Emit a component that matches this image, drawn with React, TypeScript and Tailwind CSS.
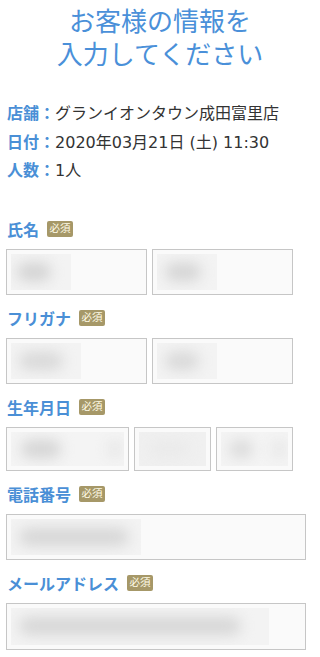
import React from 'react'

type Blob = { left: number; width: number; tone: string }

type Box = { width: string; height: string; inner: number; innerBg?: string; blobs: Blob[] }

// blurred placeholder content inside an input box
function BlurInput({ width, height, inner, innerBg = 'bg-[#f3f3f3]', blobs }: Box) {
  return (
    <div className={`${width} ${height} shrink-0 border border-[#c6c6c6] bg-[#fafafa] p-[4px]`}>
      <div className={`relative h-full overflow-hidden ${innerBg}`} style={{ width: inner }}>
        {blobs.map((b, i) => (
          <span
            key={i}
            className={`absolute top-1/2 h-[18px] -translate-y-1/2 rounded-full blur-[7px] ${b.tone}`}
            style={{ left: b.left, width: b.width }}
          />
        ))}
      </div>
    </div>
  )
}

function Label({ text }: { text: string }) {
  return (
    <div className="flex h-[24px] items-center pl-[1px]">
      <span className="text-[16px] font-bold text-[#4a8fd6]">{text}</span>
      <span className="ml-[8px] flex h-[16px] w-[26px] items-center justify-center rounded-[2px] bg-[#a69868] text-[10.5px] leading-none text-[#fffbe6]">
        必須
      </span>
    </div>
  )
}

export default function App() {
  return (
    <div className="min-h-[657px] w-[320px] bg-white px-[6px] font-['Noto_Sans_CJK_JP','Noto_Sans',sans-serif]">
      <h1 className="flex flex-col items-center pt-[3px] text-[26px] font-normal leading-[33px] text-[#4a90d9]">
        <span>お客様の情報を</span>
        <span>入力してください</span>
      </h1>

      <div className="mt-[31px] pl-[1px] font-['DejaVu_Sans','Noto_Sans_CJK_JP',sans-serif] text-[16px] leading-[28.5px] text-[#333]">
        <p>
          <span className="font-bold text-[#4a8fd6]">店舗：</span>グランイオンタウン成田富里店
        </p>
        <p>
          <span className="font-bold text-[#4a8fd6]">日付：</span>2020年03月21日 (土) 11:30
        </p>
        <p>
          <span className="font-bold text-[#4a8fd6]">人数：</span>1人
        </p>
      </div>

      <div className="mt-[31px] flex flex-col gap-[11px]">
        <section>
          <Label text="氏名" />
          <div className="mt-[8px] flex gap-[5px]">
            <BlurInput width="w-[141px]" height="h-[46px]" inner={60} blobs={[{ left: 6, width: 34, tone: 'bg-[#d2d2d2]' }]} />
            <BlurInput width="w-[141px]" height="h-[46px]" inner={60} blobs={[{ left: 8, width: 36, tone: 'bg-[#d4d4d4]' }]} />
          </div>
        </section>

        <section>
          <Label text="フリガナ" />
          <div className="mt-[8px] flex gap-[5px]">
            <BlurInput width="w-[141px]" height="h-[46px]" inner={70} blobs={[{ left: 8, width: 44, tone: 'bg-[#d8d8d8]' }]} />
            <BlurInput width="w-[141px]" height="h-[46px]" inner={60} blobs={[{ left: 8, width: 34, tone: 'bg-[#d8d8d8]' }]} />
          </div>
        </section>

        <section>
          <Label text="生年月日" />
          <div className="mt-[8px] flex gap-[5px]">
            <BlurInput
              width="w-[123px]"
              height="h-[44px]"
              inner={113}
              innerBg="bg-[#f4f4f4]"
              blobs={[
                { left: 10, width: 40, tone: 'bg-[#d4d4d4]' },
                { left: 98, width: 12, tone: 'bg-[#e4e4e4]' },
              ]}
            />
            <BlurInput width="w-[77px]" height="h-[44px]" inner={67} innerBg="bg-[#f0f0f0]" blobs={[{ left: 10, width: 40, tone: 'bg-[#eaeaea]' }]} />
            <BlurInput
              width="w-[77px]"
              height="h-[44px]"
              inner={67}
              innerBg="bg-[#f4f4f4]"
              blobs={[
                { left: 8, width: 24, tone: 'bg-[#dadada]' },
                { left: 52, width: 12, tone: 'bg-[#e4e4e4]' },
              ]}
            />
          </div>
        </section>

        <section>
          <Label text="電話番号" />
          <div className="mt-[8px] flex">
            <BlurInput width="w-[300px]" height="h-[46px]" inner={130} blobs={[{ left: 8, width: 110, tone: 'bg-[#d6d6d6]' }]} />
          </div>
        </section>

        <section>
          <Label text="メールアドレス" />
          <div className="mt-[8px] flex">
            <BlurInput width="w-[300px]" height="h-[47px]" inner={258} blobs={[{ left: 8, width: 222, tone: 'bg-[#d6d6d6]' }]} />
          </div>
        </section>
      </div>
    </div>
  )
}
